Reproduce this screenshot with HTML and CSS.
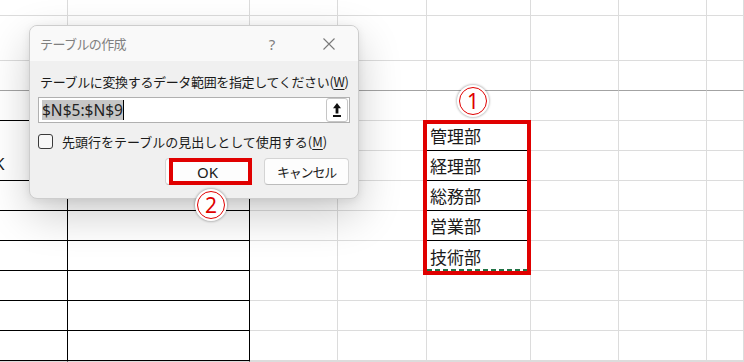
FILE: index.html
```html
<!DOCTYPE html>
<html lang="ja">
<head>
<meta charset="utf-8">
<title>テーブルの作成</title>
<link rel="stylesheet" href="styles.css">
</head>
<body>
<div class="sheet">
  <div class="c"></div><div class="c"></div><div class="c"></div><div class="c"></div><div class="c"></div><div class="c"></div><div class="c"></div><div class="c"></div>
  <div class="c"></div><div class="c"></div><div class="c"></div><div class="c"></div><div class="c"></div><div class="c"></div><div class="c"></div><div class="c"></div>
  <div class="c dk"></div><div class="c dk"></div><div class="c dk"></div><div class="c dk"></div><div class="c dk"></div><div class="c dk"></div><div class="c dk"></div><div class="c dk"></div>
  <div class="c bb"></div><div class="c bb"></div><div class="c"></div><div class="c"></div><div class="c"></div><div class="c"></div><div class="c"></div><div class="c"></div>

  <div class="c br bb r2 k"><span>K</span></div><div class="c br bb r2"></div><div class="c"></div><div class="c"></div><div class="c d bb">管理部</div><div class="c"></div><div class="c"></div><div class="c"></div>
  <div class="c"></div><div class="c"></div><div class="c d bb">経理部</div><div class="c"></div><div class="c"></div><div class="c"></div>

  <div class="c br bb"></div><div class="c br bb"></div><div class="c"></div><div class="c"></div><div class="c d bb">総務部</div><div class="c"></div><div class="c"></div><div class="c"></div>
  <div class="c br bb"></div><div class="c br bb"></div><div class="c"></div><div class="c"></div><div class="c d bb">営業部</div><div class="c"></div><div class="c"></div><div class="c"></div>
  <div class="c br bb"></div><div class="c br bb"></div><div class="c"></div><div class="c"></div><div class="c d gd">技術部</div><div class="c"></div><div class="c"></div><div class="c"></div>
  <div class="c br bb"></div><div class="c br bb"></div><div class="c"></div><div class="c"></div><div class="c"></div><div class="c"></div><div class="c"></div><div class="c"></div>
  <div class="c br bb"></div><div class="c br bb"></div><div class="c"></div><div class="c"></div><div class="c"></div><div class="c"></div><div class="c"></div><div class="c"></div>
  <div class="c br bb"></div><div class="c br bb"></div><div class="c"></div><div class="c"></div><div class="c"></div><div class="c"></div><div class="c"></div><div class="c"></div>
  <div class="c br"></div><div class="c br"></div><div class="c"></div><div class="c"></div><div class="c"></div><div class="c"></div><div class="c"></div><div class="c"></div>
</div>

<div class="mark mark-range"></div>
<div class="badge badge-1">1</div>

<div class="dialog">
  <div class="titlebar">
    <span class="title">テーブルの作成</span>
    <span class="tb-btn help">?</span>
    <span class="tb-btn close">
      <svg width="12" height="12" viewBox="0 0 12 12"><path d="M0.5 0.5 L11.5 11.5 M11.5 0.5 L0.5 11.5" stroke="#7a7a7a" stroke-width="1.1" fill="none"/></svg>
    </span>
  </div>
  <div class="body">
    <div class="label">テーブルに変換するデータ範囲を指定してください(<u>W</u>)</div>
    <div class="input">
      <span class="sel">$N$5:$N$9</span><span class="caret"></span>
      <span class="collapse">
        <svg width="8" height="14" viewBox="0 0 8 14"><path d="M4 0 L8 5.2 H5.4 V10.5 H2.6 V5.2 H0 Z" fill="#111"/><rect x="0" y="12" width="8" height="2" fill="#111"/></svg>
      </span>
    </div>
    <div class="check"><span class="box"></span><span class="check-text">先頭行をテーブルの見出しとして使用する(<u>M</u>)</span></div>
    <div class="buttons">
      <span class="btn ok">OK</span>
      <span class="btn cancel">キャンセル</span>
    </div>
  </div>
</div>

<div class="mark mark-ok"></div>
<div class="badge badge-2">2</div>
</body>
</html>
```

FILE: styles.css
```css
* { box-sizing: border-box; }

body {
  margin: 0;
  width: 744px;
  height: 362px;
  overflow: hidden;
  background: #ffffff;
  position: relative;
  font-family: "Noto Sans", "Noto Sans CJK JP", sans-serif;
  color: #1b1b1b;
}

.sheet {
  display: grid;
  grid-template-columns: 68px 182px 88px 89px 104px 88px 88px 37px;
  grid-template-rows: 16px 45px repeat(10, 30px) 1px;
}

.c {
  border-right: 1px solid #dcdcdc;
  border-bottom: 1px solid #dcdcdc;
  min-width: 0;
  min-height: 0;
  overflow: hidden;
}

.dk { border-bottom-color: #a3a3a3; }
.bb { border-bottom-color: #000000; }
.br { border-right-color: #000000; }
.r2 { grid-row: span 2; }

.k {
  display: flex;
  align-items: flex-end;
  padding-bottom: 6px;
  font-size: 17px;
  line-height: 20px;
}
.k span { margin-left: -6px; }

.d {
  display: flex;
  align-items: center;
  padding-left: 3px;
  font-family: "Noto Sans CJK JP", sans-serif;
  font-size: 17px;
  color: #1a1a1a;
}

.gd {
  border-bottom: none;
  background: repeating-linear-gradient(90deg, #217346 0 5px, transparent 5px 8px) left bottom / 100% 2px no-repeat;
}

.mark {
  position: absolute;
  border: 4px solid #e00000;
}
.mark-range { left: 423px; top: 120px; width: 108px; height: 155px; }
.mark-ok { left: 169px; top: 158px; width: 83px; height: 27px; }

.badge {
  position: absolute;
  width: 28px;
  height: 28px;
  border-radius: 50%;
  background: #ffffff;
  border: 1.5px solid #e00000;
  color: #e00000;
  font-family: "Noto Sans", sans-serif;
  font-size: 21px;
  line-height: 1;
  display: flex;
  align-items: center;
  justify-content: center;
  box-shadow: 0 0 0 2px #ffffff, 0 0 2px 3px rgba(0, 0, 0, 0.22);
}
.badge-1 { left: 459px; top: 87px; }
.badge-2 { left: 197px; top: 191px; }

.dialog {
  position: absolute;
  left: 29px;
  top: 25px;
  width: 330px;
  height: 174px;
  background: #f0f0f0;
  border: 1px solid #cdcdcd;
  border-radius: 8px;
  overflow: hidden;
  box-shadow: 0 16px 44px rgba(0, 0, 0, 0.2), 0 2px 8px rgba(0, 0, 0, 0.08);
}

.titlebar {
  height: 35px;
  background: #f9f9f9;
  display: flex;
  align-items: center;
  padding-left: 10px;
  padding-right: 6px;
}

.title {
  font-family: "Noto Sans CJK JP", sans-serif;
  font-size: 13px;
  letter-spacing: -0.6px;
  color: #808080;
}

.tb-btn {
  width: 46px;
  height: 35px;
  display: flex;
  align-items: center;
  justify-content: center;
  color: #808080;
}
.help {
  margin-left: auto;
  margin-right: 11px;
  font-size: 15px;
}

.body {
  padding: 12px 8px 0 8px;
}

.label {
  padding-left: 2px;
  height: 18px;
  font-family: "Noto Sans CJK JP", sans-serif;
  font-size: 13px;
  line-height: 18px;
  letter-spacing: -0.35px;
  white-space: nowrap;
}

u { text-underline-offset: 2px; }

.input {
  margin-top: 6px;
  height: 26px;
  background: #ffffff;
  border: 1px solid #b0b0b0;
  display: flex;
  align-items: center;
  padding: 0 1px 0 3px;
}

.sel {
  background: #c6c6c6;
  height: 20px;
  font-size: 15.5px;
  line-height: 20px;
  color: #222222;
}

.caret {
  width: 1px;
  height: 20px;
  background: #000000;
}

.collapse {
  margin-left: auto;
  width: 22px;
  height: 24px;
  border: 1px solid #c6c6c6;
  border-radius: 3px;
  background: #ffffff;
  display: flex;
  align-items: center;
  justify-content: center;
}

.check {
  margin-top: 11px;
  height: 15px;
  display: flex;
  align-items: center;
  gap: 9px;
}

.box {
  width: 15px;
  height: 15px;
  border: 1px solid #3a3a3a;
  border-radius: 3px;
  background: #f7f7f7;
}

.check-text {
  font-family: "Noto Sans CJK JP", sans-serif;
  font-size: 13px;
  line-height: 18px;
  letter-spacing: 0px;
  white-space: nowrap;
}

.buttons {
  margin-top: 9px;
  display: flex;
  justify-content: flex-end;
  gap: 14px;
  padding-right: 1px;
}

.btn {
  width: 85px;
  height: 27px;
  display: flex;
  align-items: center;
  justify-content: center;
  background: #fdfdfd;
  border: 1px solid #d4d4d4;
  border-bottom-color: #bcbcbc;
  border-radius: 4px;
}

.ok {
  font-size: 15px;
}

.cancel {
  font-family: "Noto Sans CJK JP", sans-serif;
  font-size: 13px;
  letter-spacing: -1.2px;
}
```
